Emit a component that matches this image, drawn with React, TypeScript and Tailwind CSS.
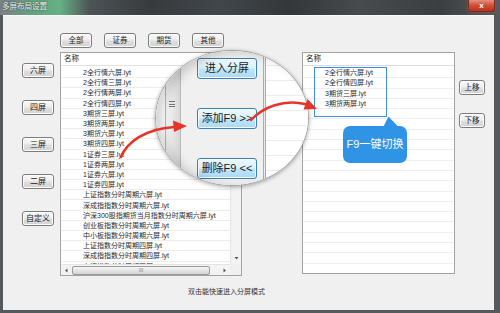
import type { ReactNode } from "react";

const leftItems = [
  "2全行情六屏.lyt",
  "2全行情三屏.lyt",
  "2全行情两屏.lyt",
  "2全行情四屏.lyt",
  "3期货三屏.lyt",
  "3期货两屏.lyt",
  "3期货六屏.lyt",
  "3期货四屏.lyt",
  "1证券三屏.lyt",
  "1证券两屏.lyt",
  "1证券六屏.lyt",
  "1证券四屏.lyt",
  "上证指数分时周期六屏.lyt",
  "深成指指数分时周期六屏.lyt",
  "沪深300股指期货当月指数分时周期六屏.lyt",
  "创业板指数分时周期六屏.lyt",
  "中小板指数分时周期六屏.lyt",
  "上证指数分时周期四屏.lyt",
  "深成指指数分时周期四屏.lyt",
  "上证指数分时周期两屏.lyt",
];

const rightItems = ["2全行情六屏.lyt", "2全行情四屏.lyt", "3期货三屏.lyt", "3期货两屏.lyt"];

const winButtonClass =
  "flex items-center justify-center rounded-[3px] border border-[#7c7c7c] bg-[linear-gradient(180deg,#f8f8f8_0%,#ededed_48%,#dfdfdf_52%,#d3d3d3_100%)] leading-none text-[#222] shadow-[inset_0_0_0_1px_#fdfdfd]";

const lensButtonClass =
  "flex h-[21px] w-[60px] items-center justify-center rounded-[3px] border border-[#3c7fb1] bg-[linear-gradient(180deg,#ecf7fd_0%,#dcf1fc_48%,#c1e6fb_52%,#aad9f3_100%)] text-[11px] leading-none text-[#1b1b1b] shadow-[inset_0_0_0_1px_#f5fbff]";

function WinButton({ children, className }: { children: ReactNode; className: string }) {
  return <button className={`${winButtonClass} ${className}`}>{children}</button>;
}

function TitleBar() {
  return (
    <div className="flex h-[15px] items-start justify-between bg-[linear-gradient(90deg,#7c8083_0%,#62a57f_7%,#66b087_12%,#4c5255_18%,#373b3e_30%,#41464a_44%,#33373a_58%,#474b4e_72%,#3a3e41_88%,#585c5f_100%)]">
      <span className="pl-[2px] pt-[2px] text-[7.5px] leading-[10px] text-[#f2f2f2] [text-shadow:0_0_2px_#222]">
        多屏布局设置
      </span>
      <div className="mr-[5px] flex h-[12px] w-[27px] items-center justify-center rounded-b-[3px] border border-t-0 border-[#7a2a1e] bg-[linear-gradient(180deg,#e39080_0%,#cf4e36_50%,#b9331f_100%)] text-[8px] font-bold leading-none text-white shadow-[0_0_3px_rgba(230,90,60,0.6)]">
        x
      </div>
    </div>
  );
}

function LeftList() {
  return (
    <div className="flex h-[224px] w-[182px] flex-col border border-[#a3a3a3] bg-white">
      <div className="flex min-h-0 flex-1">
        <div className="flex min-w-0 flex-1 flex-col">
          <div className="flex h-[13px] shrink-0 items-center border-b border-[#e2e2e2] pl-[3px] text-[7.5px] text-[#222]">
            名称
          </div>
          <div className="min-h-0 flex-1 overflow-hidden pt-[2px]">
            {leftItems.map((item) => (
              <div
                key={item}
                className="flex h-[10.2px] items-center whitespace-nowrap border-b border-[#ececec] pl-[22px] text-[7px] leading-none text-[#2a2a2a]"
              >
                {item}
              </div>
            ))}
          </div>
        </div>
        <div className="flex w-[11px] flex-col justify-end border-l border-[#e4e4e4] bg-[#f3f3f3] pb-[3px]">
          <svg width="11" height="6" viewBox="0 0 11 6">
            <polygon points="3.5,2 7.5,2 5.5,4.5" fill="#555" />
          </svg>
        </div>
      </div>
      <div className="flex h-[11px] shrink-0">
        <div className="flex flex-1 items-center border-t border-[#e4e4e4] bg-[#f3f3f3] px-[2px]">
          <svg width="7" height="9" viewBox="0 0 7 9">
            <polygon points="4.5,2.5 4.5,6.5 2,4.5" fill="#555" />
          </svg>
          <div className="ml-[2px] flex h-[9px] w-[138px] items-center justify-center rounded-[2px] border border-[#9a9a9a] bg-[linear-gradient(180deg,#f6f6f6_0%,#e5e5e5_50%,#d4d4d4_100%)] text-[5px] leading-none text-[#777]">
            III
          </div>
          <div className="flex-1" />
          <svg width="7" height="9" viewBox="0 0 7 9">
            <polygon points="2.5,2.5 2.5,6.5 5,4.5" fill="#555" />
          </svg>
        </div>
        <div className="w-[11px] bg-[#f0f0f0]" />
      </div>
    </div>
  );
}

function RightList() {
  return (
    <div className="flex h-[222px] w-[153px] flex-col border border-[#a3a3a3] bg-white">
      <div className="flex h-[13px] shrink-0 items-center border-b border-[#dcdcdc] pl-[3px] text-[7.5px] text-[#222]">
        名称
      </div>
      <div className="min-h-0 flex-1 overflow-hidden pt-[2px]">
        {Array.from({ length: 21 }, (_, index) => (
          <div
            key={index}
            className="flex h-[10.3px] items-center whitespace-nowrap border-b border-[#eeeeee] pl-[22px] text-[7px] leading-none text-[#2a2a2a]"
          >
            {rightItems[index] ?? ""}
          </div>
        ))}
      </div>
    </div>
  );
}

function Lens() {
  return (
    <div className="absolute left-[155px] top-[50px] h-[136px] w-[154px] overflow-hidden rounded-[50%] border border-[#a2a2a2] shadow-[0_1px_4px_rgba(0,0,0,0.35)]">
      <div className="flex h-full">
        <div className="w-[9px] bg-white" />
        <div className="relative w-[16px] border-x border-[#b9b9b9] bg-[linear-gradient(90deg,#f7f7f7_0%,#e9e9e9_45%,#d6d6d6_100%)]">
          <div className="absolute left-[3px] top-[50px] flex w-[6px] flex-col gap-[1.5px]">
            <div className="h-px bg-[#777]" />
            <div className="h-px bg-[#777]" />
            <div className="h-px bg-[#777]" />
          </div>
        </div>
        <div className="flex w-[82px] flex-col gap-[29px] bg-[#f0f0f0] pl-[16px] pt-[7px]">
          <button className={lensButtonClass}>进入分屏</button>
          <button className={lensButtonClass}>{"添加F9 >>"}</button>
          <button className={lensButtonClass}>{"删除F9 <<"}</button>
        </div>
        <div className="w-[3px] border-x border-[#ababab] bg-[#ececec]" />
        <div className="flex-1 bg-[repeating-linear-gradient(180deg,#ffffff_0px,#ffffff_14px,#ececec_14px,#ececec_15px)]" />
      </div>
      <div className="absolute inset-0 rounded-[50%] shadow-[inset_7px_2px_10px_rgba(0,0,0,0.16)]" />
    </div>
  );
}

export default function App() {
  return (
    <div className="relative h-[313px] w-[500px] overflow-hidden bg-[#55595c] font-['Liberation_Sans','Noto_Sans_CJK_SC',sans-serif]">
      <TitleBar />
      <div className="ml-[3px] flex h-[295px] w-[491px] flex-col border-t border-[#fbfbfb] bg-[#f0f0f0]">
        <div className="mt-[17px] flex gap-[12px] pl-[57px]">
          {["全部", "证券", "期货", "其他"].map((label) => (
            <WinButton key={label} className="h-[15px] w-[32px] text-[7.5px]">
              {label}
            </WinButton>
          ))}
        </div>

        <div className="mt-[4px] flex h-[224px]">
          <div className="flex w-[51px] flex-col gap-[22px] pl-[19px] pt-[11px]">
            {["六屏", "四屏", "三屏", "二屏", "自定义"].map((label) => (
              <WinButton key={label} className="h-[15px] w-[32px] text-[8px]">
                {label}
              </WinButton>
            ))}
          </div>
          <div className="ml-[6px]">
            <LeftList />
          </div>
          <div className="w-[60px]" />
          <RightList />
          <div className="ml-[4px] flex flex-col gap-[18px] pt-[28px]">
            <WinButton className="h-[15px] w-[26px] text-[7.5px]">上移</WinButton>
            <WinButton className="h-[15px] w-[26px] text-[7.5px]">下移</WinButton>
          </div>
        </div>

        <div className="mt-[11px] pl-[185px] text-[7px] leading-[9px] text-[#333]">
          双击能快速进入分屏模式
        </div>
      </div>

      <Lens />

      <div className="absolute left-[314px] top-[67px] h-[50px] w-[73px] border-[1.5px] border-[#3f8fdc]" />

      <div className="absolute left-[343px] top-[126px] flex h-[37px] w-[64px] items-center justify-center rounded-[7px] bg-[#2f93e6] text-[11px] leading-none text-white">
        F9一键切换
      </div>

      <svg
        className="pointer-events-none absolute left-0 top-0"
        width="500"
        height="313"
        viewBox="0 0 500 313"
      >
        <path
          d="M121 157 C127 142 145 129 174 127"
          fill="none"
          stroke="#e5352b"
          strokeWidth="2.6"
          strokeLinecap="round"
        />
        <polygon points="187,126 173,120.5 174,132" fill="#e5352b" />
        <path
          d="M251 120 C263 107 284 99 305 104"
          fill="none"
          stroke="#e5352b"
          strokeWidth="2.4"
          strokeLinecap="round"
        />
        <polygon points="317,109 303.5,109.5 307.5,99" fill="#e5352b" />
        <polygon points="383,127.5 388.5,116.5 399,127.5" fill="#2f93e6" />
      </svg>
    </div>
  );
}
